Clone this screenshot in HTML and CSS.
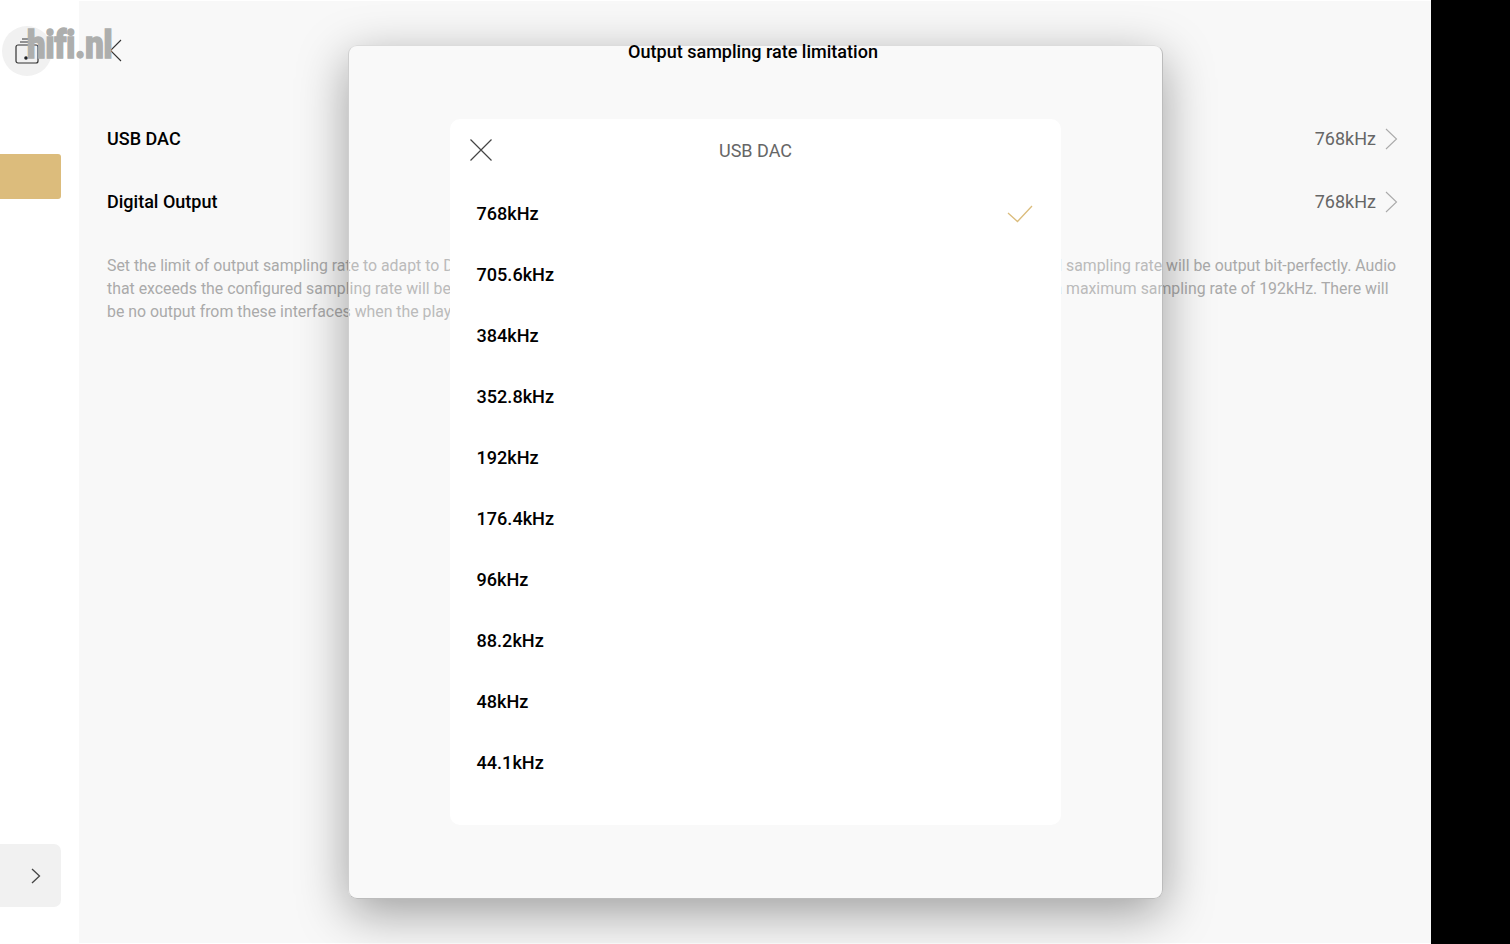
FILE: index.html
```html
<!DOCTYPE html>
<html lang="en">
<head>
<meta charset="utf-8">
<title>Output sampling rate limitation</title>
<link rel="stylesheet" href="styles.css">
</head>
<body>
<div class="screen">
  <aside class="sidebar">
    <div class="home">
      <svg class="home-icon" width="28" height="28" viewBox="0 0 28 28" fill="none" stroke="#333" stroke-width="1.2">
        <rect x="3" y="8" width="22" height="18" rx="2"/>
        <path d="M7 5h16M9 2h12"/>
        <circle cx="13" cy="21" r="1.800" fill="#222" stroke="none"/>
      </svg>
    </div>
    <div class="nav-active"></div>
    <div class="sidebar-spacer"></div>
    <div class="nav-expand">
      <svg width="10" height="16" viewBox="0 0 10 16" fill="none" stroke="#444" stroke-width="1.300"><path d="M1 1l7.500 7L1 15"/></svg>
    </div>
  </aside>
  <main class="main">
    <div class="back">
      <svg width="14" height="24" viewBox="0 0 14 24" fill="none" stroke="#333" stroke-width="1.100"><path d="M12 1L1.500 11.500 12 22"/></svg>
    </div>
    <div class="settings">
      <div class="setting">
        <span class="setting-name">USB DAC</span>
        <span class="setting-value">768kHz</span>
        <svg class="chev" width="14" height="24" viewBox="0 0 14 24" fill="none" stroke="#aaa" stroke-width="1.100"><path d="M2 2l10.500 10L2 22"/></svg>
      </div>
      <div class="setting">
        <span class="setting-name">Digital Output</span>
        <span class="setting-value">768kHz</span>
        <svg class="chev" width="14" height="24" viewBox="0 0 14 24" fill="none" stroke="#aaa" stroke-width="1.100"><path d="M2 2l10.500 10L2 22"/></svg>
      </div>
    </div>
    <div class="desc">
      <div class="desc-line"><span>Set the limit of output sampling rate to adapt to DAC</span><span class="desc-mid">original</span><span class="desc-tail">sampling rate will be output bit-perfectly. Audio</span></div>
      <div class="desc-line"><span>that exceeds the configured sampling rate will be</span><span class="desc-mid">a</span><span class="desc-tail">maximum sampling rate of 192kHz. There will</span></div>
      <div class="desc-line"><span>be no output from these interfaces when the play</span></div>
    </div>
  </main>
  <div class="edge"></div>
</div>

<section class="modal">
  <h1 class="modal-title">Output sampling rate limitation</h1>
  <div class="card">
    <header class="card-head">
      <svg class="close" width="24" height="24" viewBox="0 0 24 24" fill="none" stroke="#444" stroke-width="1.200"><path d="M1.500 1.500l21 21M22.500 1.500l-21 21"/></svg>
      <span class="card-title">USB DAC</span>
    </header>
    <ul class="rates">
      <li class="rate">768kHz<svg width="26" height="18" viewBox="0 0 26 18" fill="none" stroke="#dbbc7c" stroke-width="1.300"><path d="M1 8l9.500 8.500L25 1"/></svg></li>
      <li class="rate">705.6kHz</li>
      <li class="rate">384kHz</li>
      <li class="rate">352.8kHz</li>
      <li class="rate">192kHz</li>
      <li class="rate">176.4kHz</li>
      <li class="rate">96kHz</li>
      <li class="rate">88.2kHz</li>
      <li class="rate">48kHz</li>
      <li class="rate">44.1kHz</li>
    </ul>
  </div>
</section>

<div class="watermark">hifi.nl</div>
</body>
</html>
```

FILE: styles.css
```css
* { box-sizing: border-box; }
html, body { margin: 0; height: 100%; overflow: hidden; }
body { font-family: Roboto, "Liberation Sans", sans-serif; background: #000; color: #000; position: relative; }

.screen { display: flex; height: 944px; }

.sidebar { width: 79px; background: #fff; display: flex; flex-direction: column; }
.home { width: 50px; height: 50px; margin: 26px 0 0 2px; border-radius: 50%; background: #f1f1f1; display: flex; align-items: center; justify-content: center; }
.nav-active { width: 61px; height: 45px; margin-top: 78px; background: #dcbc7c; border-radius: 0 3px 3px 0; }
.sidebar-spacer { flex: 1; }
.nav-expand { width: 61px; height: 63px; margin-bottom: 37px; background: #f1f1f1; border-radius: 0 7px 7px 0; display: flex; align-items: center; justify-content: flex-end; padding-right: 20px; }

.main { width: 1352px; background: #f8f8f8; border-top: 1px solid #fff; border-bottom: 1px solid #fff; display: flex; flex-direction: column; padding: 38px 33px 0 28px; }
.back { height: 24px; padding-left: 2px; }
.back svg { display: block; }
.settings { margin-top: 44px; }
.setting { display: flex; align-items: center; height: 63px; }
.setting-name { flex: 1; font-size: 18px; font-weight: 500; }
.setting-value { font-size: 18px; color: #666; margin-right: 8px; }
.chev { display: block; }
.desc { margin-top: 21px; font-size: 15.85px; line-height: 23px; color: #aaa; }
.desc-line { display: flex; }
.desc-mid { margin-left: auto; margin-right: 4px; }
.desc-tail { width: 332px; }

.edge { flex: 1; background: #000; }

.modal { position: absolute; left: 348px; top: 45px; width: 815px; height: 854px; border: 1px solid; border-color: #dcdcdc #bcbcbc #bcbcbc #cfcfcf; border-radius: 9px; background: rgba(255,255,255,.2); box-shadow: 0 14px 50px rgba(0,0,0,.37); display: flex; flex-direction: column; align-items: center; }
.modal-title { margin: -5px 0 0 -5px; font-size: 18.05px; line-height: 22px; font-weight: 500; height: 78px; }
.card { width: 611px; height: 706px; margin-left: -1px; background: #fff; border-radius: 10px; }
.card-head { height: 64px; position: relative; display: flex; align-items: center; justify-content: center; padding-bottom: 2px; }
.close { position: absolute; left: 19px; top: 19px; }
.card-title { font-size: 18px; color: #666; padding-left: 1px; }
.rates { list-style: none; margin: 0; padding: 0 28px 0 27px; }
.rate { height: 61px; display: flex; align-items: center; justify-content: space-between; font-size: 18.1px; font-weight: 500; }

.watermark { position: absolute; left: 27px; top: 22px; font-size: 38px; line-height: 46px; font-weight: 900; font-variant-ligatures: none; color: #adaead; -webkit-text-stroke: 1.5px #adaead; transform: scaleX(.86); transform-origin: left center; }
```
